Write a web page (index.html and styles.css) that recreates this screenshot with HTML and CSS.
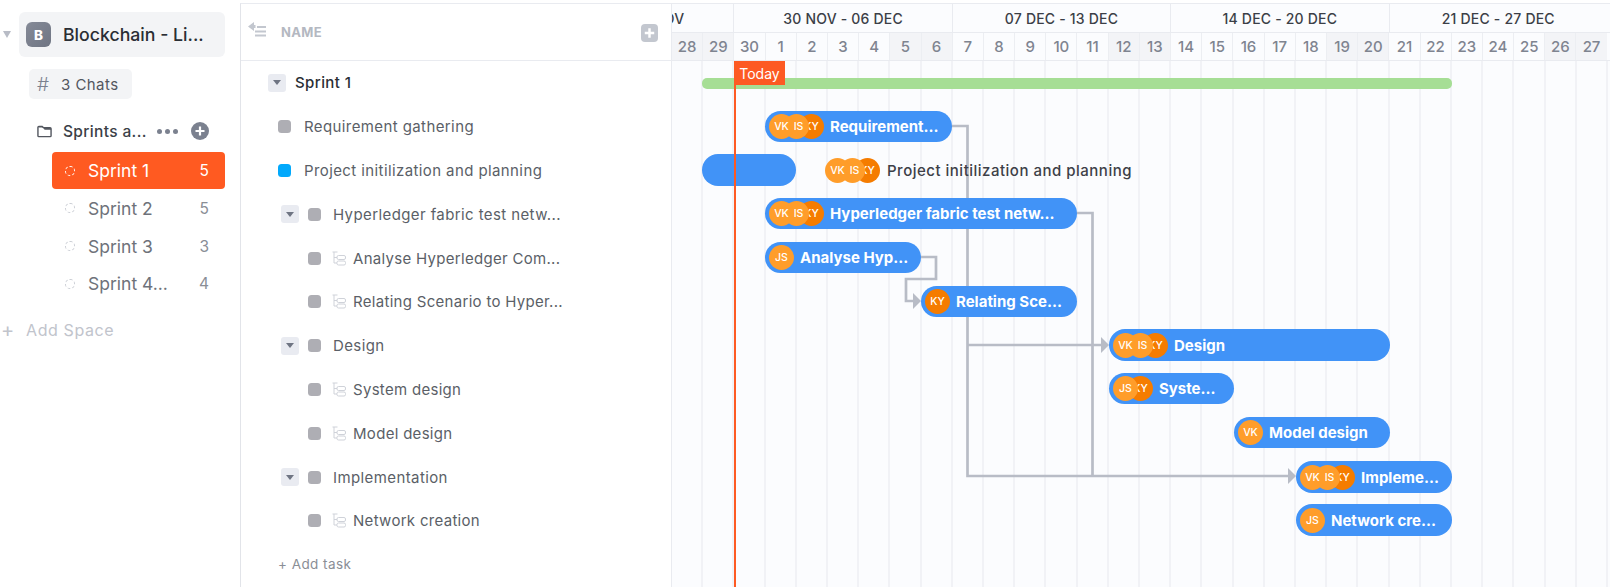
FILE: index.html
```html
<!DOCTYPE html>
<html lang="en">
<head>
<meta charset="utf-8">
<title>Sprint 1 Gantt</title>
<link rel="stylesheet" href="styles.css">
</head>
<body>
<div class="app">
  <aside class="sidebar">
    <div class="space-row">
      <span class="caret"></span>
      <div class="space-tile">
        <span class="space-badge">B</span>
        <span class="space-name">Blockchain - Li...</span>
      </div>
    </div>
    <div class="chats"><span class="hash">#</span><span>3 Chats</span></div>
    <div class="folder">
      <svg class="folder-icon" viewBox="0 0 16 13"><path d="M1 3V2a1 1 0 0 1 1-1h3.500l1.500 1.500h7a1 1 0 0 1 1 1V11a1 1 0 0 1-1 1H2a1 1 0 0 1-1-1V3z" fill="none" stroke="#53575f" stroke-width="1.500"/><path d="M1 2.500h6l1 2h7V3L7 2H2z" fill="#53575f"/></svg>
      <span class="folder-name">Sprints a...</span>
      <span class="dots"><i></i><i></i><i></i></span>
      <svg class="plus-circle" viewBox="0 0 18 18"><circle cx="9" cy="9" r="9" fill="#7b818f"/><path d="M9 4.500v9M4.500 9h9" stroke="#fff" stroke-width="2.200"/></svg>
    </div>
    <ul class="lists">
      <li class="list active"><span class="ring"></span><span class="list-name">Sprint 1</span><span class="count">5</span></li>
      <li class="list"><span class="ring"></span><span class="list-name">Sprint 2</span><span class="count">5</span></li>
      <li class="list"><span class="ring"></span><span class="list-name">Sprint 3</span><span class="count">3</span></li>
      <li class="list"><span class="ring"></span><span class="list-name">Sprint 4...</span><span class="count">4</span></li>
    </ul>
    <div class="add-space"><span class="add-plus">+</span><span>Add Space</span></div>
  </aside>

  <section class="tasks">
    <header class="tasks-head">
      <svg class="collapse" viewBox="0 0 18 15"><path d="M0 4.500 6 0v3h1.500v3H6v3z" fill="#c3c7cf"/><path d="M9 5h9M7 9.500h11M7 13.500h11" stroke="#c3c7cf" stroke-width="2"/></svg>
      <span class="name-label">NAME</span>
      <span class="head-plus"><svg viewBox="0 0 18 18"><path d="M9 4v10M4 9h10" stroke="#fff" stroke-width="2.600"/></svg></span>
    </header>
    <div class="row row-list"><span class="toggle"></span><span class="list-title">Sprint 1</span></div>
    <div class="row row-task"><span class="sq"></span><span>Requirement gathering</span></div>
    <div class="row row-task"><span class="sq blue"></span><span>Project initilization and planning</span></div>
    <div class="row row-parent"><span class="toggle"></span><span class="sq"></span><span>Hyperledger fabric test netw...</span></div>
    <div class="row row-sub"><span class="sq"></span><svg class="tree" viewBox="0 0 14 15"><path d="M.5 1h5M2 1v11h3M2 6.500h3" fill="none" stroke="#cfd2d9"/><rect x="5" y="4.500" width="8.500" height="4" rx="1.500" fill="none" stroke="#cfd2d9"/><rect x="5" y="10" width="8.500" height="4" rx="1.500" fill="none" stroke="#cfd2d9"/></svg><span>Analyse Hyperledger Com...</span></div>
    <div class="row row-sub"><span class="sq"></span><svg class="tree" viewBox="0 0 14 15"><path d="M.5 1h5M2 1v11h3M2 6.500h3" fill="none" stroke="#cfd2d9"/><rect x="5" y="4.500" width="8.500" height="4" rx="1.500" fill="none" stroke="#cfd2d9"/><rect x="5" y="10" width="8.500" height="4" rx="1.500" fill="none" stroke="#cfd2d9"/></svg><span>Relating Scenario to Hyper...</span></div>
    <div class="row row-parent"><span class="toggle"></span><span class="sq"></span><span>Design</span></div>
    <div class="row row-sub"><span class="sq"></span><svg class="tree" viewBox="0 0 14 15"><path d="M.5 1h5M2 1v11h3M2 6.500h3" fill="none" stroke="#cfd2d9"/><rect x="5" y="4.500" width="8.500" height="4" rx="1.500" fill="none" stroke="#cfd2d9"/><rect x="5" y="10" width="8.500" height="4" rx="1.500" fill="none" stroke="#cfd2d9"/></svg><span>System design</span></div>
    <div class="row row-sub"><span class="sq"></span><svg class="tree" viewBox="0 0 14 15"><path d="M.5 1h5M2 1v11h3M2 6.500h3" fill="none" stroke="#cfd2d9"/><rect x="5" y="4.500" width="8.500" height="4" rx="1.500" fill="none" stroke="#cfd2d9"/><rect x="5" y="10" width="8.500" height="4" rx="1.500" fill="none" stroke="#cfd2d9"/></svg><span>Model design</span></div>
    <div class="row row-parent"><span class="toggle"></span><span class="sq"></span><span>Implementation</span></div>
    <div class="row row-sub"><span class="sq"></span><svg class="tree" viewBox="0 0 14 15"><path d="M.5 1h5M2 1v11h3M2 6.500h3" fill="none" stroke="#cfd2d9"/><rect x="5" y="4.500" width="8.500" height="4" rx="1.500" fill="none" stroke="#cfd2d9"/><rect x="5" y="10" width="8.500" height="4" rx="1.500" fill="none" stroke="#cfd2d9"/></svg><span>Network creation</span></div>
    <div class="row row-add">+ Add task</div>
  </section>

  <section class="gantt">
    <header class="weeks">
      <div class="week week-cut"><span>23 NOV - 29 NOV</span></div>
      <div class="week">30 NOV - 06 DEC</div>
      <div class="week">07 DEC - 13 DEC</div>
      <div class="week">14 DEC - 20 DEC</div>
      <div class="week">21 DEC - 27 DEC</div>
    </header>
    <div class="days">
      <span class="day off">28</span><span class="day off">29</span>
      <span class="day">30</span><span class="day">1</span><span class="day">2</span><span class="day">3</span><span class="day">4</span><span class="day off">5</span><span class="day off">6</span>
      <span class="day">7</span><span class="day">8</span><span class="day">9</span><span class="day">10</span><span class="day">11</span><span class="day off">12</span><span class="day off">13</span>
      <span class="day">14</span><span class="day">15</span><span class="day">16</span><span class="day">17</span><span class="day">18</span><span class="day off">19</span><span class="day off">20</span>
      <span class="day">21</span><span class="day">22</span><span class="day">23</span><span class="day">24</span><span class="day">25</span><span class="day off">26</span><span class="day off">27</span>
    </div>
    <div class="canvas">
      <svg class="links" viewBox="0 0 938 526" width="938" height="526">
        <g fill="none" stroke="#b8bcc6" stroke-width="2.700">
          <path d="M275 65H295.500V415H620"/>
          <path d="M295.500 284H432"/>
          <path d="M400 152H420.500V415"/>
          <path d="M240 196H264V218H234V240H244"/>
        </g>
        <g fill="#b8bcc6">
          <path d="M241 232l8 8-8 8z"/>
          <path d="M429 276l8 8-8 8z"/>
          <path d="M616 407l8 8-8 8z"/>
        </g>
      </svg>

      <div class="summary"></div>

      <div class="bar b-req"><div class="avatars"><span class="av">VK</span><span class="av">IS</span><span class="av ky">KY</span></div><span class="bar-text">Requirement...</span></div>
      <div class="bar b-proj"></div>
      <div class="outside"><div class="avatars"><span class="av">VK</span><span class="av">IS</span><span class="av ky">KY</span></div><span class="outside-text">Project initilization and planning</span></div>
      <div class="bar b-hyp"><div class="avatars"><span class="av">VK</span><span class="av">IS</span><span class="av ky">KY</span></div><span class="bar-text">Hyperledger fabric test netw...</span></div>
      <div class="bar b-ana"><div class="avatars"><span class="av">JS</span></div><span class="bar-text">Analyse Hyp...</span></div>
      <div class="bar b-rel"><div class="avatars"><span class="av ky">KY</span></div><span class="bar-text">Relating Sce...</span></div>
      <div class="bar b-des"><div class="avatars"><span class="av">VK</span><span class="av">IS</span><span class="av ky">KY</span></div><span class="bar-text">Design</span></div>
      <div class="bar b-sys"><div class="avatars"><span class="av">JS</span><span class="av ky">KY</span></div><span class="bar-text">Syste...</span></div>
      <div class="bar b-mod"><div class="avatars"><span class="av">VK</span></div><span class="bar-text">Model design</span></div>
      <div class="bar b-imp"><div class="avatars"><span class="av">VK</span><span class="av">IS</span><span class="av ky">KY</span></div><span class="bar-text">Impleme...</span></div>
      <div class="bar b-net"><div class="avatars"><span class="av">JS</span></div><span class="bar-text">Network cre...</span></div>

      <div class="today-line"></div>
      <div class="today-tag">Today</div>
    </div>
  </section>
</div>
</body>
</html>
```
FILE: styles.css
```css
* { box-sizing: border-box; }
html, body { margin: 0; height: 100%; }
body { font-family: Inter, "Open Sans", sans-serif; color: #53575f; background: #fff; overflow: hidden; }
ul { list-style: none; margin: 0; padding: 0; }
.app { display: flex; width: 1610px; height: 587px; overflow: hidden; }

/* sidebar */
.sidebar { width: 240px; flex: none; padding-top: 12px; }
.space-row { display: flex; align-items: center; padding-left: 3px; gap: 8px; }
.caret { width: 0; height: 0; border: 4.500px solid transparent; border-top: 7px solid #b8bcc6; border-bottom: 0; }
.space-tile { width: 206px; height: 45px; background: #f3f4f6; border-radius: 6px; display: flex; align-items: center; padding-left: 7px; gap: 12px; }
.space-badge { width: 25px; height: 25px; border-radius: 6px; background: linear-gradient(135deg, #858a97, #6f7583); color: #fff; font-size: 13.500px; font-weight: 800; display: flex; align-items: center; justify-content: center; }
.space-name { font-size: 17.700px; font-weight: 500; color: #2a2e34; white-space: nowrap; }
.chats { margin: 12px 0 0 29px; width: 103px; height: 30px; border-radius: 5px; background: #f3f4f6; display: flex; align-items: center; padding-left: 8px; gap: 11px; font-size: 15px; color: #53575f; letter-spacing: .45px; }
.hash { font-size: 19px; font-weight: 300; color: #7b818f; width: 13px; }
.folder { display: flex; align-items: center; margin: 23px 0 0 37px; height: 18px; }
.folder-icon { width: 15px; height: 13px; margin-right: 11px; }
.folder-name { font-size: 15.500px; font-weight: 500; color: #3b3f47; width: 94px; white-space: nowrap; letter-spacing: .35px; }
.dots { display: flex; gap: 3px; width: 34px; }
.dots i { width: 5px; height: 5px; border-radius: 50%; background: #7b818f; }
.plus-circle { width: 18px; height: 18px; }
.lists { margin: 12px 0 0 52px; width: 173px; }
.list { height: 37.700px; display: flex; align-items: center; padding: 0 16px 0 13px; color: #6e727a; font-size: 17.500px; }
.list.active { height: 37px; margin-bottom: .5px; background: #ff5a21; border-radius: 4px; color: #fff; }
.ring { width: 10px; height: 10px; border-radius: 50%; border: 1px dashed #c9ccd3; margin-right: 13px; }
.active .ring { border-color: #fff; }
.list-name { flex: 1; white-space: nowrap; }
.count { font-size: 15.500px; color: #8a8e96; }
.active .count { color: #fff; }
.add-space { margin: 17px 0 0 1px; display: flex; align-items: center; gap: 12px; color: #c1c4cc; font-size: 16px; letter-spacing: .6px; }
.add-plus { font-size: 20px; line-height: 18px; width: 13px; }

/* task column */
.tasks { width: 432px; flex: none; margin-top: 3px; border-top: 1px solid #e9ebf0; border-left: 1px solid #e2e4e9; border-right: 1px solid #e9ebf0; }
.tasks-head { height: 57px; border-bottom: 1px solid #e9ebf0; display: flex; align-items: center; padding: 0 13px 0 7px; }
.collapse { width: 18px; height: 15px; margin: -5px 16px 0 0; }
.name-label { flex: 1; font-size: 13px; font-weight: 700; color: #b4b8c1; letter-spacing: .3px; margin-top: -1px; margin-left: -1px; }
.head-plus { width: 17px; height: 18px; border-radius: 4px; background: #c3c7cf; display: flex; margin-top: 2px; }
.head-plus svg { width: 17px; height: 18px; }
.row { height: 43.800px; display: flex; align-items: center; font-size: 15px; white-space: nowrap; color: #5b5f67; letter-spacing: .4px; }
.row-list { padding-left: 27px; gap: 9px; }
.row-task { padding-left: 37px; gap: 13px; }
.row-parent { padding-left: 40px; gap: 9px; }
.row-parent .sq { margin-right: 3px; }
.row-sub { padding-left: 67px; letter-spacing: .3px; }
.row-sub .sq { margin-right: 11px; }
.row-add { padding-left: 37px; font-size: 13.500px; color: #8a8e96; margin-top: -1px; letter-spacing: .45px; }
.list-title { color: #2a2e34; font-weight: 500; }
.toggle { width: 18px; height: 18px; background: #e9ebf1; border-radius: 3px; display: flex; align-items: center; justify-content: center; }
.toggle::before { content: ""; border: 4px solid transparent; border-top: 5px solid #6f7583; border-bottom: 0; }
.sq { width: 13px; height: 13px; border-radius: 3.500px; background: #aeaeb4; flex: none; }
.sq.blue { background: #02a9fc; }
.tree { width: 14px; height: 15px; margin-right: 7px; flex: none; }

/* gantt */
.gantt { flex: 1; min-width: 0; margin-top: 3px; background: #fbfcfe; border-top: 1px solid #e9ebf0; display: flex; flex-direction: column; }
.weeks { height: 28px; display: flex; flex: none; }
.week { width: 218.400px; flex: none; display: flex; align-items: center; justify-content: center; border-left: 1px solid #e9ebf0; font-size: 14px; font-weight: 500; color: #3b3f47; white-space: nowrap; letter-spacing: .2px; }
.week-cut { width: 61.400px; border-left: 0; justify-content: flex-end; padding-right: 49px; overflow: hidden; }
.week-cut span { flex: none; }
.days { height: 29px; flex: none; display: flex; border-top: 1px solid #e9ebf0; border-bottom: 1px solid #e9ebf0; }
.day { width: 31.200px; flex: none; display: flex; align-items: center; justify-content: center; font-size: 15px; font-weight: 500; color: #7f8490; border-left: 1px solid #eceef2; }
.day:first-child { width: 30.200px; border-left: 0; }
.day.off { background: #f3f4f7; }
.canvas { flex: 1; position: relative; overflow: hidden; background-image: repeating-linear-gradient(90deg, transparent 0, transparent 29.200px, #f1f2f6 29.200px, #f1f2f6 31.200px); }
.links { position: absolute; left: 0; top: 0; }
.summary { position: absolute; left: 30px; width: 750px; top: 17px; height: 11px; border-radius: 5px; background: #a6de95; }
.bar { position: absolute; height: 31px; border-radius: 16px; background: #4193f7; display: flex; align-items: center; padding-left: 4px; gap: 6px; color: #fff; overflow: hidden; }
.bar-text { font-size: 15px; font-weight: 700; white-space: nowrap; }
.b-req { left: 93px; top: 50px; width: 187px; }
.b-proj { left: 30px; top: 93px; width: 94px; height: 32px; }
.b-hyp { left: 93px; top: 137px; width: 312px; }
.b-ana { left: 93px; top: 181px; width: 156px; }
.b-rel { left: 249px; top: 225px; width: 156px; }
.b-des { left: 437px; top: 268px; width: 281px; height: 32px; }
.b-sys { left: 437px; top: 312px; width: 125px; }
.b-mod { left: 562px; top: 356px; width: 156px; }
.b-imp { left: 624px; top: 400px; width: 156px; height: 32px; }
.b-net { left: 624px; top: 443px; width: 156px; height: 32px; }
.avatars { display: flex; flex: none; }
.av { width: 25px; height: 25px; border-radius: 50%; background: #ff9d2a; color: #fff; font-size: 10.500px; font-weight: 500; display: flex; align-items: center; justify-content: center; margin-left: -10px; position: relative; z-index: 1; }
.av:first-child { margin-left: 0; z-index: 2; }
.av + .av:not(.ky) { padding-left: 4px; }
.av.ky { background: #f57c00; z-index: 0; }
.outside { position: absolute; left: 153px; top: 97px; display: flex; align-items: center; gap: 7px; }
.outside-text { font-size: 15px; font-weight: 500; color: #3d4047; white-space: nowrap; letter-spacing: .5px; }
.today-line { position: absolute; left: 62px; top: 0; bottom: 0; width: 2px; background: #fd5a23; }
.today-tag { position: absolute; left: 62px; top: 0; width: 51px; height: 24px; background: #fd5a23; color: #fff; font-size: 14px; display: flex; align-items: center; justify-content: center; }
```
